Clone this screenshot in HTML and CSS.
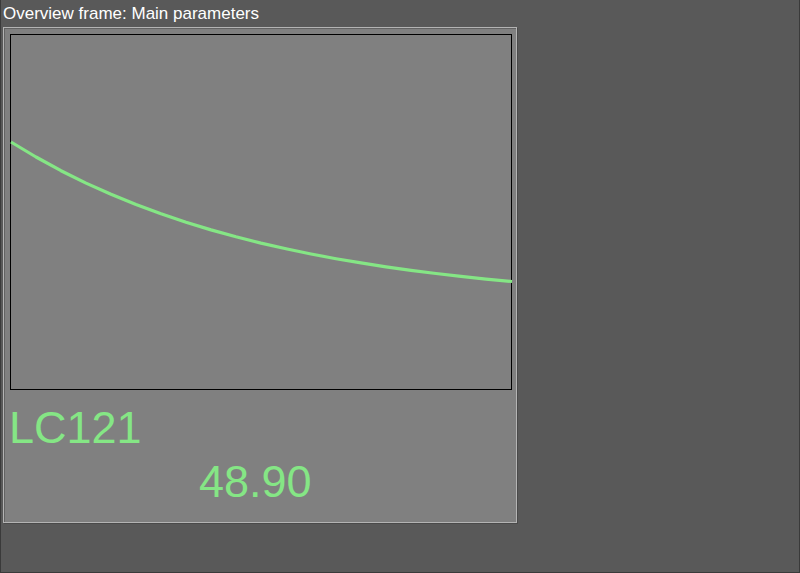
FILE: index.html
```html
<!DOCTYPE html>
<html>
<head>
<meta charset="utf-8">
<link rel="stylesheet" href="styles.css">
</head>
<body>
<div class="window">
  <div class="title">Overview frame: Main parameters</div>
  <div class="panel">
    <div class="plot">
      <svg class="chart" width="500" height="354" viewBox="0 0 500 354">
        <polyline class="curve" points="0,107 25,122 50,135.7 75,148.1 100,159.3 125,169.5 150,178.8 175,187.2 200,194.9 225,201.8 250,208.1 275,213.8 300,219 325,223.7 350,227.9 375,231.8 400,235.3 425,238.5 450,241.4 475,244.1 501,246.5"/>
      </svg>
    </div>
    <div class="tag">LC121</div>
    <div class="value">48.90</div>
  </div>
</div>
</body>
</html>
```
FILE: styles.css
```css
html, body {
  margin: 0;
  padding: 0;
  background: #595959;
}
.window {
  box-sizing: border-box;
  width: 800px;
  height: 573px;
  background: #595959;
  border-left: 1px solid #3a3a3a;
  border-right: 1px solid #3a3a3a;
  border-bottom: 1px solid #3a3a3a;
  font-family: "Liberation Sans", Arial, sans-serif;
}
.title {
  height: 27px;
  line-height: 27px;
  padding-left: 2px;
  font-size: 17px;
  color: #ffffff;
  white-space: nowrap;
}
.panel {
  box-sizing: border-box;
  margin-left: 2px;
  width: 514px;
  height: 496px;
  background: #808080;
  border: 1px solid #b4b4b4;
  box-shadow: inset 1px 1px 0 #626262, 1px 1px 0 #4a4a4a;
  padding: 6px;
}
.plot {
  box-sizing: border-box;
  width: 502px;
  height: 356px;
  border: 1px solid #000000;
  background: #808080;
}
.chart {
  display: block;
  overflow: visible;
}
.curve {
  fill: none;
  stroke: #85e685;
  stroke-width: 3.2;
  stroke-linejoin: round;
}
.tag, .value {
  font-size: 45px;
  line-height: 45px;
  color: #85e685;
  white-space: nowrap;
}
.tag {
  margin-top: 15px;
  margin-left: -1px;
}
.value {
  margin-top: 9px;
  padding-left: 189px;
}
```
